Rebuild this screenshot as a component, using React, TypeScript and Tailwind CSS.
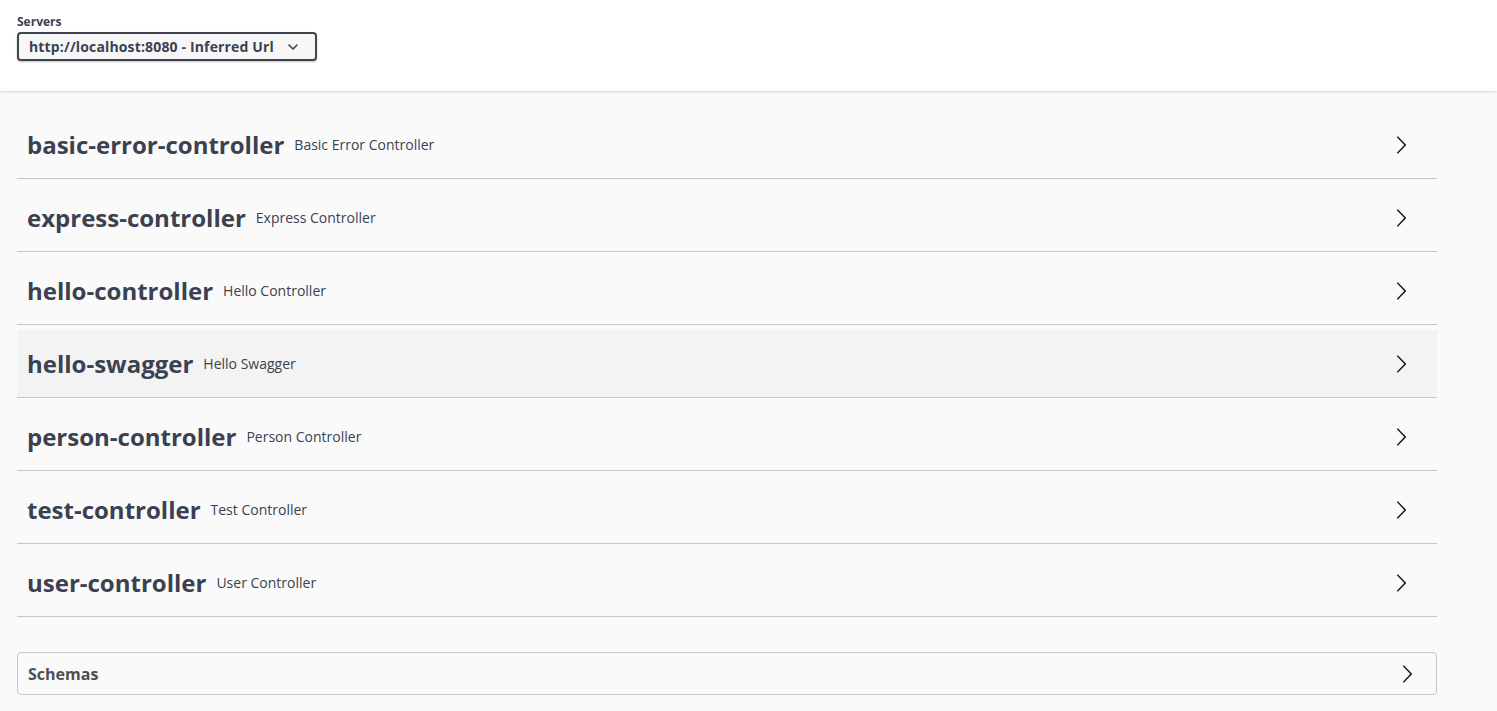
import React from 'react';

const TAGS = [
  { name: 'basic-error-controller', description: 'Basic Error Controller' },
  { name: 'express-controller', description: 'Express Controller' },
  { name: 'hello-controller', description: 'Hello Controller' },
  { name: 'hello-swagger', description: 'Hello Swagger' },
  { name: 'person-controller', description: 'Person Controller' },
  { name: 'test-controller', description: 'Test Controller' },
  { name: 'user-controller', description: 'User Controller' },
];

function Arrow({ className }: { className?: string }) {
  return (
    <svg viewBox="0 0 20 20" width="20" height="20" className={className} aria-hidden="true">
      <path
        fill="currentColor"
        d="M13.25 10L6.109 2.58c-.268-.27-.268-.707 0-.979.268-.27.701-.27.969 0l7.83 7.908c.268.271.268.709 0 .979l-7.83 7.908c-.268.271-.701.27-.969 0-.268-.269-.268-.707 0-.979L13.25 10z"
      />
    </svg>
  );
}

export default function App() {
  const hovered = 'hello-swagger';

  return (
    <div className="min-h-screen bg-[#fafafa] text-[#3b4151] font-['Open_Sans',sans-serif]">
      {/* Servers */}
      <div className="h-[91px] bg-white shadow-[0_1px_2px_0_rgba(0,0,0,0.15)] pt-[14px] px-[17px]">
        <label className="block text-[12px] font-bold leading-[16px]">Servers</label>
        <div className="mt-[2px] w-[300px] h-[29px] flex items-center justify-between pl-[10px] pr-[17px] bg-[#f7f7f7] border-2 border-[#41444e] rounded-[4px] shadow-[0_1px_2px_0_rgba(0,0,0,0.25)]">
          <span className="text-[14px] font-bold whitespace-nowrap tracking-[0.15px]">
            http://localhost:8080 - Inferred Url
          </span>
          <svg viewBox="0 0 10 6" width="10" height="6" aria-hidden="true">
            <path d="M1 1l4 4 4-4" fill="none" stroke="currentColor" strokeWidth="1.6" strokeLinecap="round" strokeLinejoin="round" />
          </svg>
        </div>
      </div>

      {/* Tags */}
      <div className="ml-[17px] w-[1420px] pt-[20px] pb-[16px]">
        {TAGS.map((t) => (
          <h3
            key={t.name}
            className={`flex items-center h-[68px] mb-[5px] pl-[10px] pr-[26px] border-b border-[#c4c6cb] ${
              t.name === hovered ? 'bg-[#f3f3f3]' : ''
            }`}
          >
            <span className="text-[24px] font-bold leading-none">{t.name}</span>
            <span className="ml-[10px] text-[14px] font-normal">{t.description}</span>
            <span className="flex-1" />
            <Arrow className="text-[#1a1a1a]" />
          </h3>
        ))}

        {/* Schemas */}
        <section className="mt-[35px] border border-[#c4c6cb] rounded-[4px]">
          <h4 className="flex items-center h-[41px] pl-[10px] pr-[19px]">
            <span className="text-[16px] font-bold text-[#505050]">Schemas</span>
            <span className="flex-1" />
            <Arrow className="text-[#1a1a1a]" />
          </h4>
        </section>
      </div>
    </div>
  );
}
